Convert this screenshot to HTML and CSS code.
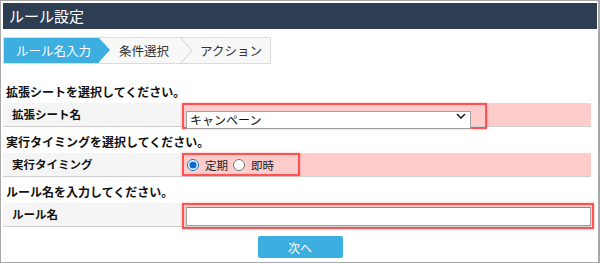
FILE: index.html
```html
<!DOCTYPE html>
<html lang="ja">
<head>
<meta charset="utf-8">
<title>ルール設定</title>
<link rel="stylesheet" href="styles.css">
</head>
<body>
<div class="frame">
  <div class="header">ルール設定</div>
  <div class="steps">
    <div class="step step-active">ルール名入力</div>
    <div class="step step-2">条件選択</div>
    <svg class="chev" width="14" height="27" viewBox="0 0 14 27"><polyline points="1,0 13,13.5 1,27" fill="none" stroke="#cfcfcf" stroke-width="1"/></svg>
    <div class="step step-3">アクション</div>
  </div>

  <div class="section-title">拡張シートを選択してください。</div>
  <div class="row">
    <div class="label">拡張シート名</div>
    <div class="value">
      <div class="hl hl-select">
        <div class="select-wrap">
          <select class="select"><option>キャンペーン</option></select>
          <svg class="caret" width="10" height="6" viewBox="0 0 10 6"><polyline points="1,1 5,5 9,1" fill="none" stroke="#222" stroke-width="1.6"/></svg>
        </div>
      </div>
    </div>
  </div>

  <div class="section-title">実行タイミングを選択してください。</div>
  <div class="row">
    <div class="label">実行タイミング</div>
    <div class="value">
      <div class="hl hl-radio">
        <label class="radio"><input type="radio" name="t" checked><span>定期</span></label>
        <label class="radio"><input type="radio" name="t"><span>即時</span></label>
      </div>
    </div>
  </div>

  <div class="section-title">ルール名を入力してください。</div>
  <div class="row">
    <div class="label">ルール名</div>
    <div class="value">
      <div class="hl hl-input">
        <input class="text" type="text">
      </div>
    </div>
  </div>

  <div class="actions">
    <button class="btn">次へ</button>
  </div>
</div>
</body>
</html>
```

FILE: styles.css
```css
* { box-sizing: border-box; }
html, body { margin: 0; padding: 0; background: #fff; }
body {
  font-family: "Noto Sans CJK JP", "Noto Sans", sans-serif;
  color: #111;
}
.frame {
  width: 600px;
  height: 263px;
  border: 1px solid #a8a8a8;
  border-right: 2px solid #a8a8a8;
  padding: 2px 1px 0 2px;
  overflow: hidden;
}
.header {
  height: 26px;
  background: #2d3d52;
  color: #fff;
  font-size: 15px;
  line-height: 26px;
  padding-left: 6px;
}
.steps {
  margin-top: 8px;
  width: 268px;
  height: 27px;
  border: 1px solid #dcdcdc;
  background: #f8f8f8;
  display: flex;
  align-items: center;
  font-size: 12.5px;
}
.step {
  height: 25px;
  line-height: 25px;
  color: #333;
}
.step-active {
  position: relative;
  background: #3daee0;
  color: #fff;
  width: 95px;
  padding-left: 12px;
  margin-right: 20px;
}
.step-active::after {
  content: "";
  position: absolute;
  right: -11px;
  top: 0;
  border-top: 12.5px solid transparent;
  border-bottom: 12.5px solid transparent;
  border-left: 11px solid #3daee0;
}
.step-2 { width: 60px; }
.chev { display: block; }
.step-3 { padding-left: 7px; }

.section-title {
  font-weight: bold;
  font-size: 12px;
  line-height: 18px;
  padding: 6px 0 2px 3px;
  height: 26px;
}
.steps + .section-title { margin-top: 13px; }

.row {
  display: flex;
  width: 588px;
  height: 24px;
  border-bottom: 1px solid #cfcfcf;
}
.label {
  width: 179px;
  flex-shrink: 0;
  background: #f5f5f5;
  font-size: 11.5px;
  font-weight: bold;
  line-height: 23px;
  padding-left: 9px;
}
.value {
  flex: 1;
  background: #ffcccc;
  display: flex;
  align-items: flex-start;
}
.hl {
  flex-shrink: 0;
  box-shadow: inset 0 0 0 2px #ff5252, 0 0 2px rgba(255, 80, 80, 0.5);
}
.hl-select {
  width: 305px;
  height: 26px;
  padding: 3px 0 0 4px;
  position: relative;
  z-index: 1;
}
.select-wrap {
  position: relative;
  width: 285px;
  height: 18px;
}
.select {
  appearance: none;
  -webkit-appearance: none;
  width: 285px;
  height: 18px;
  border: 1px solid #a0a0a0;
  border-radius: 0;
  background: #fff;
  font-family: "Noto Sans CJK JP", sans-serif;
  font-size: 12px;
  line-height: 16px;
  padding: 0 0 0 3px;
  margin: 0;
  color: #111;
}
.caret {
  position: absolute;
  right: 5px;
  top: 7px;
}
.hl-radio {
  width: 118px;
  height: 23px;
  display: flex;
  align-items: center;
  padding-left: 5px;
}
.radio {
  display: flex;
  align-items: center;
  font-size: 11.5px;
  margin-right: 5px;
  color: #222;
}
.radio input {
  width: 12px;
  height: 12px;
  margin: 0 6px 0 0;
  accent-color: #0a6ed1;
}
.hl-input {
  width: 412px;
  height: 26px;
  padding: 4px 0 0 4px;
  position: relative;
  z-index: 1;
}
.text {
  display: block;
  width: 405px;
  height: 19px;
  border: 1px solid #a0a0a0;
  border-top-color: #888;
  margin: 0;
  padding: 0;
  background: #fff;
}
.actions {
  display: flex;
  justify-content: center;
  margin-top: 9px;
  width: 594px;
}
.btn {
  width: 85px;
  height: 22px;
  border: 0;
  border-radius: 2px;
  background: #3daee0;
  color: #fff;
  font-family: "Noto Sans CJK JP", sans-serif;
  font-size: 12px;
  padding: 0;
}
```
